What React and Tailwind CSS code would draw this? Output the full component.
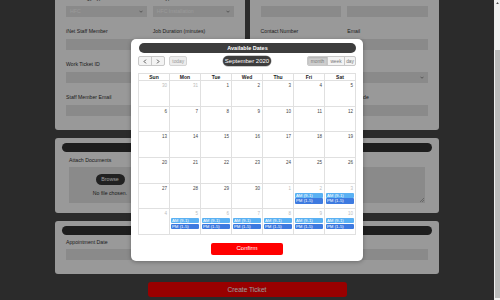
import { useLayoutEffect, useRef } from "react";

function Chevron() {
  return (
    <svg width="4" height="3" viewBox="0 0 8 5" className="shrink-0">
      <path d="M1 1l3 3 3-3" fill="none" stroke="#555" strokeWidth="1.2" />
    </svg>
  );
}

function Field({ label, value, select }) {
  return (
    <div className="flex flex-col">
      <div className="h-[6px] text-[5.2px] leading-[6px] text-[#333] whitespace-nowrap">{label}</div>
      <div className="mt-[5px] flex h-[11px] items-center justify-between bg-[#e6e6e6] px-[4px] text-[5.2px] text-white">
        <span>{value}</span>
        {select && <Chevron />}
      </div>
    </div>
  );
}

function Card({ rows }) {
  return (
    <div className="rounded-[3px] bg-white px-[7px] pt-[5px] pb-[14px]">
      <div className="h-[9px] rounded-full bg-[#333]" />
      <div className="mt-[4px] flex flex-col gap-[11px] px-[4px]">
        {rows.map((r, i) => (
          <div key={i} className="grid grid-cols-2 gap-[6px]">
            {r.map((f, j) => (
              <Field key={j} {...f} />
            ))}
          </div>
        ))}
      </div>
    </div>
  );
}

const leftRows = [
  [
    { label: "Technology Type", value: "HFC", select: true },
    { label: "Job Type", value: "HFC Installation", select: true },
  ],
  [{ label: "iNet Staff Member" }, { label: "Job Duration (minutes)" }],
  [{ label: "Work Ticket ID" }, { label: "Service ID" }],
  [{ label: "Staff Member Email" }, { label: "Priority" }],
];

const rightRows = [
  [{ label: "Customer Name" }, { label: "Customer ID" }],
  [{ label: "Contact Number" }, { label: "Email" }],
  [{ label: "Suburb" }, { label: "State", select: true }],
  [{ label: "Street Address" }, { label: "Postcode" }],
];

function SmallChevron({ dir }) {
  return (
    <svg width="4" height="5" viewBox="0 0 6 8">
      <path
        d={dir === "l" ? "M4.5 1L1.5 4l3 3" : "M1.5 1l3 3-3 3"}
        fill="none"
        stroke="#333"
        strokeWidth="1.3"
      />
    </svg>
  );
}

const weeks = [
  [30, 31, 1, 2, 3, 4, 5],
  [6, 7, 8, 9, 10, 11, 12],
  [13, 14, 15, 16, 17, 18, 19],
  [20, 21, 22, 23, 24, 25, 26],
  [27, 28, 29, 30, 1, 2, 3],
  [4, 5, 6, 7, 8, 9, 10],
];

function isOther(w, d) {
  return (w === 0 && d > 20) || (w >= 4 && d < 15);
}

function hasEvents(w, i) {
  return (w === 4 && i >= 5) || (w === 5 && i >= 1);
}

function Modal() {
  const days = ["Sun", "Mon", "Tue", "Wed", "Thu", "Fri", "Sat"];
  return (
    <div className="flex h-[222px] w-[232px] flex-col rounded-[5px] bg-white px-[7px] pt-[4px] shadow-[0_1px_4px_rgba(0,0,0,0.3)]">
      <div className="ml-[1px] flex h-[10px] items-center justify-center rounded-full bg-[#3d3d3d] text-[5.5px] leading-[6px] font-bold text-white">
        Available Dates
      </div>
      <div className="mt-[3px] flex h-[10px] items-center justify-between">
        <div className="flex w-[49px] items-center gap-[4px]">
          <div className="flex h-[10px] overflow-hidden rounded-[2px] border border-[#c8c8c8] bg-[#f3f3f3]">
            <div className="flex w-[13px] items-center justify-center border-r border-[#c8c8c8]">
              <SmallChevron dir="l" />
            </div>
            <div className="flex w-[13px] items-center justify-center">
              <SmallChevron dir="r" />
            </div>
          </div>
          <div className="flex h-[10px] w-[18px] items-center justify-center rounded-[2px] border border-[#d4d4d4] bg-[#ececec] text-[4.8px] leading-[5px] text-[#999]">
            today
          </div>
        </div>
        <div className="flex h-[10px] w-[48px] items-center justify-center rounded-full bg-[#3d3d3d] text-[6px] leading-[6px] text-white ring-[0.5px] ring-[#999]">
          September 2020
        </div>
        <div className="flex h-[10px] w-[49px] overflow-hidden rounded-[2px] border border-[#c8c8c8] bg-[#f3f3f3] text-[4.8px] leading-[5px] text-[#777]">
          <div className="flex w-[19px] items-center justify-center bg-[#cfcfcf] shadow-[inset_0_1px_2px_rgba(0,0,0,0.15)]">
            month
          </div>
          <div className="flex w-[17px] items-center justify-center border-l border-[#c8c8c8]">week</div>
          <div className="flex flex-1 items-center justify-center border-l border-[#c8c8c8]">day</div>
        </div>
      </div>
      <div className="mt-[7px] grid grid-cols-7 border-l border-t border-[#e0e0e0]">
        {days.map((d) => (
          <div
            key={d}
            className="flex h-[7px] items-center justify-center border-r border-b border-[#e0e0e0] text-[5px] leading-[5px] font-bold text-[#222]"
          >
            {d}
          </div>
        ))}
        {weeks.map((w, wi) =>
          w.map((d, i) => (
            <div key={wi + "-" + i} className="flex h-[25.67px] flex-col border-r border-b border-[#e0e0e0]">
              <div
                className={
                  "pr-[2px] pt-[2px] text-right text-[4.5px] leading-[5px] " +
                  (isOther(wi, d) ? "text-[#bbb]" : "text-[#444]")
                }
              >
                {d}
              </div>
              {hasEvents(wi, i) && (
                <div className="mt-[2px] flex flex-col px-[1px]">
                  <div className="h-[5px] rounded-[1px] bg-[#5ab1f3] pl-[1px] text-[4.3px] leading-[5px] text-white">
                    AM (9-1)
                  </div>
                  <div className="mt-[0.5px] h-[5.5px] rounded-[1px] bg-[#3d7ae0] pl-[1px] text-[4.3px] leading-[5.5px] text-white">
                    PM (1-5)
                  </div>
                </div>
              )}
            </div>
          ))
        )}
      </div>
      <div className="mx-auto mt-[8px] flex h-[12px] w-[72px] items-center justify-center rounded-[2px] bg-[#ff0000] text-[6px] text-white">
        Confirm
      </div>
    </div>
  );
}

export default function App() {
  const ref = useRef(null);
  useLayoutEffect(() => {
    if (ref.current) ref.current.scrollTop = ref.current.scrollHeight;
  }, []);
  return (
    <div className="relative flex h-[300px] w-[500px] overflow-hidden font-['Liberation_Sans',Arial,sans-serif]">
      <div ref={ref} className="h-full flex-1 overflow-hidden bg-[#484848]">
        <div className="mx-auto flex w-[384px] flex-col gap-[8px] pt-[10px] pb-[3px]">
          <div className="flex h-[19px] items-center justify-center text-[9px] font-bold text-white">
            Create Work Ticket
          </div>
          <div className="grid grid-cols-2 gap-[5px]">
            <Card rows={leftRows} />
            <Card rows={rightRows} />
          </div>
          <div className="rounded-[3px] bg-white px-[7px] pt-[5px] pb-[10px]">
            <div className="h-[9px] rounded-full bg-[#333]" />
            <div className="px-[7px]">
              <div className="mt-[5px] h-[6px] text-[5.2px] leading-[6px] text-[#333]">Attach Documents</div>
              <div className="relative mt-[4px] flex h-[36px] bg-[#e6e6e6]">
                <div className="flex w-[82px] flex-col items-center pt-[7px]">
                  <div className="flex h-[11px] w-[29px] items-center justify-center rounded-full bg-[#383838] text-[5.2px] text-white">
                    Browse
                  </div>
                  <div className="mt-[5px] text-[5.2px] leading-[6px] text-[#333]">No file chosen.</div>
                </div>
                <svg width="4" height="4" viewBox="0 0 4 4" className="absolute right-[1px] bottom-[1px]">
                  <path d="M4 0L0 4M4 2L2 4" stroke="#888" strokeWidth="0.6" />
                </svg>
              </div>
            </div>
          </div>
          <div className="rounded-[3px] bg-white px-[7px] pt-[5px] pb-[14px]">
            <div className="h-[9px] rounded-full bg-[#333]" />
            <div className="px-[4px]">
              <div className="mt-[4px] h-[6px] text-[5.2px] leading-[6px] text-[#333]">Appointment Date</div>
              <div className="mt-[4px] h-[11px] bg-[#e6e6e6]" />
            </div>
          </div>
          <div className="mx-auto flex h-[15px] w-[199px] items-center justify-center rounded-[3px] bg-[#ff0000] text-[6.6px] text-white">
            Create Ticket
          </div>
        </div>
      </div>
      <div className="flex h-full w-[6px] flex-col bg-[#f1f1f1]">
        <div className="flex h-[6px] items-center justify-center">
          <svg width="3" height="2" viewBox="0 0 4 3">
            <path d="M2 0L4 3H0z" fill="#505050" />
          </svg>
        </div>
        <div className="mt-[44px] mb-[2px] mx-[0.5px] flex-1 bg-[#bdbdbd]" />
      </div>
      <div className="absolute inset-y-0 left-0 right-[6px] flex items-center justify-center bg-black/40">
        <Modal />
      </div>
    </div>
  );
}
